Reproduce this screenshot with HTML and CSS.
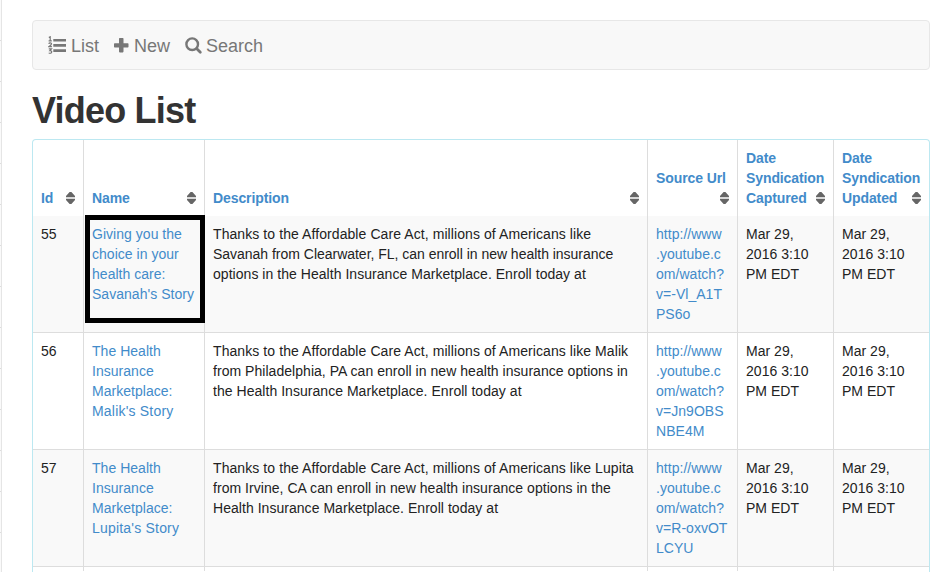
FILE: index.html
```html
<!DOCTYPE html>
<html lang="en">
<head>
<meta charset="utf-8">
<title>Video List</title>
<link rel="stylesheet" href="styles.css">
</head>
<body>
<aside class="rail"></aside>
<main>
<nav class="navbar">
<a class="nav-list"><svg width="19" height="19" viewBox="0 0 19 19"><path fill="currentColor" d="M5.300 2.900H18v2.700H5.300zM5.300 8H18v2.700H5.300zM5.300 13.200H18v2.700H5.300z"/><path fill="none" stroke="currentColor" stroke-width="1.200" d="M.8 1.600 2.200.8v4M.6 4.900h3.200M.8 7.800q.2-1 1.500-1t1.200 1.100Q3.400 8.800.8 10.700h3.100M.8 12.900h2.700l-1.600 1.800q1.900-.1 1.800 1.300-.2 1.800-3 1"/></svg><span>List</span></a>
<a class="nav-new"><svg width="15" height="15" viewBox="0 0 15 15"><path fill="currentColor" d="M5.700 0h3.100q.7 0 .7.700v4.600h4.300q.7 0 .7.700v2.700q0 .7-.7.700H9.500v4.200q0 .8-.7.800H5.700q-.7 0-.7-.8V9.400H.7Q0 9.400 0 8.700V6q0-.7.700-.7H5V.7Q5 0 5.700 0z"/></svg><span>New</span></a>
<a class="nav-search"><svg width="18" height="18" viewBox="0 0 18 18"><g fill="none" stroke="currentColor" stroke-width="2.400"><circle cx="7.200" cy="7.200" r="5.800"/><path stroke-linecap="round" stroke-width="2.800" d="m11.800 11.800 3.500 3.500"/></g></svg><span>Search</span></a>
</nav>
<h1>Video List</h1>
<div class="panel">
<table>
<colgroup><col class="c-id"><col class="c-name"><col class="c-desc"><col class="c-url"><col class="c-date"><col></colgroup>
<thead><tr>
<th><div class="head"><span>Id</span><i class="sort"></i></div></th>
<th><div class="head"><span>Name</span><i class="sort"></i></div></th>
<th><div class="head"><span>Description</span><i class="sort"></i></div></th>
<th><div class="head"><span>Source Url<br>&nbsp;</span><i class="sort"></i></div></th>
<th><div class="head"><span>Date<br>Syndication<br>Captured</span><i class="sort"></i></div></th>
<th><div class="head last"><span>Date<br>Syndication<br>Updated</span><i class="sort"></i></div></th>
</tr></thead>
<tbody>
<tr><td>55</td><td class="selected"><a>Giving you the<br>choice in your<br>health care:<br>Savanah's Story</a></td><td><span class="loose">Thanks to the Affordable Care Act, millions of Americans like</span><br><span class="tight">Savanah from Clearwater, FL, can enroll in new health insurance</span><br><span class="mid">options in the Health Insurance Marketplace. Enroll today at</span></td><td><a>http://www<br>.youtube.c<br>om/watch?<br>v=-Vl_A1T<br>PS6o</a></td><td>Mar 29,<br>2016 3:10<br>PM EDT</td><td>Mar 29,<br>2016 3:10<br>PM EDT</td></tr>
<tr><td>56</td><td><a>The Health<br>Insurance<br>Marketplace:<br><span class="name">Malik's Story</span></a></td><td><span class="loose">Thanks to the Affordable Care Act, millions of Americans like Malik</span><br><span class="mid">from Philadelphia, PA can enroll in new health insurance options in</span><br><span class="mid">the Health Insurance Marketplace. Enroll today at</span></td><td><a>http://www<br>.youtube.c<br>om/watch?<br>v=Jn9OBS<br>NBE4M</a></td><td>Mar 29,<br>2016 3:10<br>PM EDT</td><td>Mar 29,<br>2016 3:10<br>PM EDT</td></tr>
<tr><td>57</td><td><a>The Health<br>Insurance<br>Marketplace:<br><span class="name">Lupita's Story</span></a></td><td><span class="loose">Thanks to the Affordable Care Act, millions of Americans like Lupita</span><br><span class="mid">from Irvine, CA can enroll in new health insurance options in the</span><br><span class="mid">Health Insurance Marketplace. Enroll today at</span></td><td><a>http://www<br>.youtube.c<br>om/watch?<br>v=R-oxvOT<br>LCYU</a></td><td>Mar 29,<br>2016 3:10<br>PM EDT</td><td>Mar 29,<br>2016 3:10<br>PM EDT</td></tr>
<tr class="next"><td></td><td></td><td></td><td></td><td></td><td></td></tr>
</tbody>
</table>
</div>
</main>
</body>
</html>
```
FILE: styles.css
```css
*, *::after { box-sizing: border-box; }
body {
  margin: 0;
  height: 572px;
  overflow: hidden;
  display: flex;
  background: #fff;
  color: #222;
  font: 14px/20px "Liberation Sans", Arial, sans-serif;
}
.rail {
  width: 2px;
  height: 572px;
  flex: none;
  border-right: 1px solid #e5e5e5;
  background: repeating-linear-gradient(#fafafa 0 40px, #ddd 40px 41px);
}
main { width: 898px; margin: 20px 0 0 30px; flex: none; }
.navbar {
  height: 50px;
  display: flex;
  align-items: center;
  padding: 1px 0 0 15px;
  border: 1px solid #e7e7e7;
  border-radius: 4px;
  background: #f8f8f8;
  color: #777;
  font-size: 18px;
}
.navbar a { display: flex; align-items: center; }
.navbar span { padding-top: 1px; }
.navbar svg { flex: none; }
.nav-list { width: 66px; gap: 4px; }
.nav-new { width: 71px; gap: 5px; }
.nav-search { gap: 3px; }
h1 {
  margin: 21px 0 8px;
  color: #333;
  font-size: 36px;
  line-height: 40px;
  font-weight: 700;
  letter-spacing: -0.8px;
}
.panel {
  height: 433px;
  border: 1px solid #bce8f1;
  border-bottom: 0;
  border-radius: 4px 4px 0 0;
  overflow: hidden;
}
table { width: 896px; table-layout: fixed; border-collapse: separate; border-spacing: 0; }
.c-id { width: 51px; }
.c-name { width: 121px; }
.c-desc { width: 443px; }
.c-url { width: 90px; }
.c-date { width: 96px; }
th, td { padding: 8px; text-align: left; border-right: 1px solid #ddd; white-space: nowrap; }
th:last-child, td:last-child { border-right: 0; }
th { height: 76px; vertical-align: bottom; color: #428bca; letter-spacing: -0.1px; }
td { height: 117px; vertical-align: top; border-top: 1px solid #ddd; letter-spacing: 0.03px; }
tbody tr:first-child td { height: 116px; border-top: 0; }
tbody tr:nth-child(odd) { background: #f9f9f9; }
tbody .next td { height: 5px; padding: 0; }
td a { color: #428bca; }
.loose { letter-spacing: 0.08px; }
.mid { letter-spacing: 0.04px; }
.tight { letter-spacing: -0.02px; }
.name { letter-spacing: 0.2px; }
.head { display: flex; align-items: flex-end; }
.head span { flex: 1 1 0; min-width: 0; }
.sort {
  width: 9px;
  height: 12px;
  margin-bottom: 4px;
  flex: none;
  background: #666;
  clip-path: polygon(40% 0, 60% 0, 100% 4px, 100% 5.300px, 0 5.300px, 0 6.700px, 100% 6.700px, 100% 8px, 60% 100%, 40% 100%, 0 8px, 0 4px);
}
.selected { position: relative; }
.selected::after {
  content: "";
  position: absolute;
  left: 1px;
  right: -1px;
  top: -1px;
  height: 108px;
  border: 5px solid #000;
}
```
